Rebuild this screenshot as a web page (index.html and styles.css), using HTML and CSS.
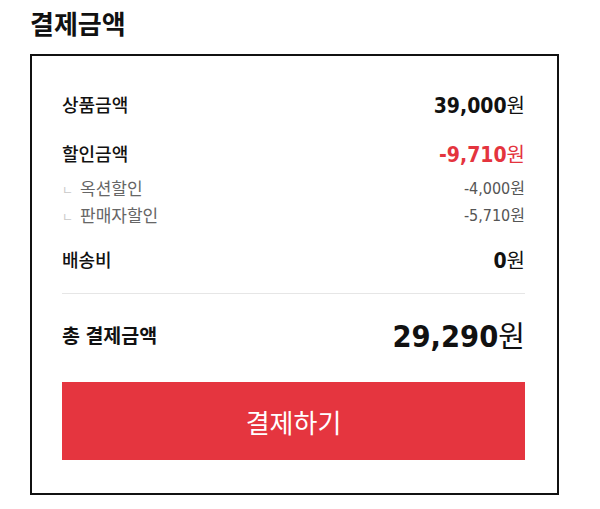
FILE: index.html
```html
<!DOCTYPE html>
<html lang="ko">
<head>
<meta charset="utf-8">
<title>결제금액</title>
<link rel="stylesheet" href="styles.css">
</head>
<body>
<div class="page">
  <h2 class="title">결제금액</h2>
  <div class="box">
    <div class="row row-first">
      <span class="label">상품금액</span>
      <span class="amount"><b class="num">39,000</b><span class="won">원</span></span>
    </div>
    <div class="row row-discount">
      <span class="label">할인금액</span>
      <span class="amount red"><b class="num">-9,710</b><span class="won">원</span></span>
    </div>
    <div class="sub">
      <div class="sub-row">
        <span class="sub-label"><span class="mark">ㄴ</span>옥션할인</span>
        <span class="sub-amount"><span class="num-r">-4,000</span>원</span>
      </div>
      <div class="sub-row">
        <span class="sub-label"><span class="mark">ㄴ</span>판매자할인</span>
        <span class="sub-amount"><span class="num-r">-5,710</span>원</span>
      </div>
    </div>
    <div class="row row-ship">
      <span class="label">배송비</span>
      <span class="amount"><b class="num">0</b><span class="won">원</span></span>
    </div>
    <hr class="divider">
    <div class="row total">
      <span class="label total-label">총 결제금액</span>
      <span class="amount total-amount"><b class="num">29,290</b><span class="won">원</span></span>
    </div>
    <button class="pay" type="button">결제하기</button>
  </div>
</div>
</body>
</html>
```

FILE: styles.css
```css
* { box-sizing: border-box; }
html, body { margin: 0; padding: 0; background: #fff; }
body {
  font-family: "Noto Sans CJK KR", "Noto Sans", sans-serif;
  color: #111;
}
.page {
  width: 600px;
  padding: 6px 41px 0 30px;
}
.title {
  margin: 0;
  font-size: 26px;
  line-height: 34px;
  font-weight: 700;
  color: #111;
}
.box {
  margin-top: 14px;
  border: 2px solid #111;
  padding: 33px 32px 33px 30px;
}
.row {
  display: flex;
  justify-content: space-between;
  align-items: center;
  height: 30px;
}
.row-discount { margin-top: 19px; }
.row-ship { margin-top: 16.5px; }
.label {
  font-size: 18px;
  font-weight: 500;
  color: #111;
}
.amount {
  display: flex;
  align-items: baseline;
  color: #111;
}
.num {
  font-family: "DejaVu Sans Condensed", "DejaVu Sans", sans-serif;
  font-weight: 700;
  font-size: 21px;
}
.won {
  font-family: "Noto Sans CJK KR", sans-serif;
  font-weight: 400;
  font-size: 20px;
}
.red { color: #e4343e; }
.sub { margin-top: 5.5px; }
.sub-row {
  display: flex;
  justify-content: space-between;
  align-items: center;
  height: 27px;
}
.sub-label {
  font-size: 17px;
  color: #666;
}
.mark {
  display: inline-block;
  width: 18px;
  font-size: 12px;
  color: #c8c8c8;
}
.sub-amount {
  font-size: 16px;
  color: #555;
}
.num-r {
  font-family: "DejaVu Sans Condensed", "DejaVu Sans", sans-serif;
  font-size: 16px;
}
.divider {
  margin: 19px 0 0;
  border: 0;
  height: 1px;
  background: #e6e6e6;
}
.total {
  margin-top: 20px;
  height: 40px;
}
.total-label {
  font-size: 19.5px;
  font-weight: 700;
}
.total-amount .num { font-size: 30.5px; }
.total-amount .won { font-size: 29px; }
.pay {
  display: block;
  width: 100%;
  height: 78px;
  margin-top: 28px;
  border: 0;
  background: #e5353f;
  color: #fff;
  font-family: "Noto Sans CJK KR", sans-serif;
  font-size: 26px;
  font-weight: 400;
  cursor: pointer;
}
```
